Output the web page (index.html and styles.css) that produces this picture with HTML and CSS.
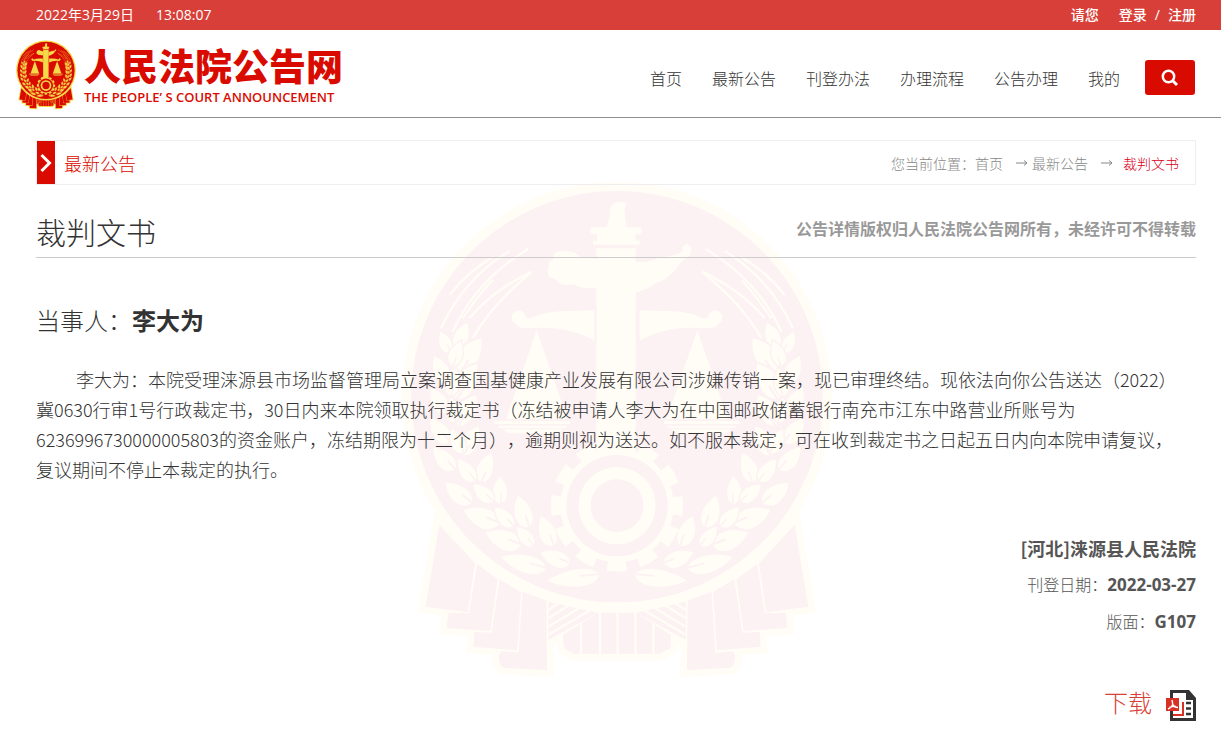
FILE: index.html
```html
<!DOCTYPE html>
<html lang="zh-CN">
<head>
    <meta charset="UTF-8">
    <meta name="viewport" content="width=device-width, initial-scale=1.0">
    <title>人民法院公告网</title>
    <link rel="stylesheet" href="styles.css">
</head>
<body>
    <!-- court emblem, shared by the logo and the watermark -->
    <svg class="defs" aria-hidden="true">
        <defs>
            <path id="leaf" d="M0 0C10-38 60-40 100 0C60 32 14 30 0 0ZM0 0L38 2"/>
            <g id="ribbon">
                <path d="M115 1035L74 1280L200 1297L222 1150Z"/>
                <path d="M228 1152L290 1198L268 1353L137 1344L142 1298L205 1300Z"/>
                <path d="M296 1198L360 1237L348 1411L217 1400L220 1356L272 1358Z"/>
                <path d="M365 1235L436 1262L438 1470L305 1463Q285 1438 300 1414L353 1418Z"/>
                <path d="M442 1265L590 1298L442 1380Z"/>
            </g>
            <g id="half">
                <g class="gold-line">
                    <path d="M120 445Q190 295 325 213M155 455Q225 300 382 207M185 415Q240 335 275 300M205 415Q270 335 392 275M215 475Q270 375 390 278M145 345Q200 275 277 230"/>
                </g>
                <g class="gold-leaf">
                    <use href="#leaf" transform="translate(170 510) rotate(289) scale(.9)"/>
                    <use href="#leaf" transform="translate(150 520) rotate(244) scale(.75)"/>
                    <use href="#leaf" transform="translate(175 580) rotate(302) scale(1.3)"/>
                    <use href="#leaf" transform="translate(155 560) rotate(288) scale(.84)"/>
                    <use href="#leaf" transform="translate(145 610) rotate(241) scale(.97)"/>
                    <use href="#leaf" transform="translate(165 660) rotate(300) scale(1.3)"/>
                    <use href="#leaf" transform="translate(150 650) rotate(280) scale(.91)"/>
                    <use href="#leaf" transform="translate(140 700) rotate(237) scale(.95)"/>
                    <use href="#leaf" transform="translate(170 740) rotate(301) scale(1.15)"/>
                    <use href="#leaf" transform="translate(165 730) rotate(259) scale(.81)"/>
                    <use href="#leaf" transform="translate(150 790) rotate(230)"/>
                    <use href="#leaf" transform="translate(185 830) rotate(298) scale(1.07)"/>
                    <use href="#leaf" transform="translate(190 820) rotate(242) scale(.85)"/>
                    <use href="#leaf" transform="translate(165 870) rotate(225)"/>
                    <use href="#leaf" transform="translate(240 910) rotate(289)"/>
                    <use href="#leaf" transform="translate(225 905) rotate(232) scale(.89)"/>
                    <use href="#leaf" transform="translate(215 970) rotate(217) scale(1.07)"/>
                    <use href="#leaf" transform="translate(300 975) rotate(269) scale(.9)"/>
                    <use href="#leaf" transform="translate(280 965) rotate(220) scale(.85)"/>
                    <use href="#leaf" transform="translate(300 1030) rotate(200) scale(1.24)"/>
                    <use href="#leaf" transform="translate(385 1045) rotate(251) scale(1.08)"/>
                    <use href="#leaf" transform="translate(340 1040) rotate(225) scale(.85)"/>
                    <use href="#leaf" transform="translate(365 1095) rotate(199) scale(1.22)"/>
                    <use href="#leaf" transform="translate(460 1100) rotate(247) scale(1.03)"/>
                    <use href="#leaf" transform="translate(400 1098) rotate(228) scale(.8)"/>
                    <use href="#leaf" transform="translate(440 1165) rotate(194) scale(1.49 1.1)"/>
                    <use href="#leaf" transform="translate(510 1150) rotate(200)"/>
                    <use href="#leaf" transform="translate(600 1182) rotate(173) scale(1.69 1.1)"/>
                </g>
                <g class="gold">
                    <path d="M580 391L500 393Q430 395 400 410Q375 424 371 402A21 21 0 1 0 345 432Q352 446 380 445Q500 436 580 482Z"/>
                    <path d="M407 450L500 718L315 718Z"/>
                    <path d="M280 723H507V732H280ZM292 737H495V744H292ZM305 748H485L470 760H320Z"/>
                </g>
            </g>
            <path id="tail" d="M485 1365L590 1298H706L810 1365L808 1405L775 1422H520L490 1405Z"/>
            <path id="stripes" d="M442 1290L475 1268M442 1315L510 1272M442 1340L545 1278M442 1364L580 1283"/>
        </defs>
        <symbol id="emblem" viewBox="0 0 1296 1500">
            <g class="ribbon-edge">
                <use href="#ribbon"/>
                <use href="#ribbon" transform="translate(1296 0) scale(-1 1)"/>
                <use href="#tail"/>
            </g>
            <g class="red">
                <use href="#ribbon"/>
                <use href="#ribbon" transform="translate(1296 0) scale(-1 1)"/>
                <use href="#tail"/>
            </g>
            <g class="gold-line">
                <use href="#stripes"/>
                <use href="#stripes" transform="translate(1296 0) scale(-1 1)"/>
                <path d="M540 1330V1422M597 1290V1422M650 1290V1422M703 1290V1422M757 1330V1422"/>
            </g>
            <circle class="gold" cx="648" cy="650" r="645"/>
            <circle class="red" cx="648" cy="650" r="617"/>
            <use href="#half"/>
            <use href="#half" transform="translate(1296 0) scale(-1 1)"/>
            <g class="gold">
                <path d="M586 850V205H704V850Z"/>
                <path d="M616 145L628 105Q622 80 645 66L678 68L670 88L676 145Z"/>
                <path d="M572 142H718Q728 152 718 163H704V182H716V194H576V182H588V163H572Q562 152 572 142Z"/>
                <path d="M590 240Q560 225 536 232Q525 210 480 213Q455 215 456 238Q438 245 444 265Q430 290 460 296Q480 322 520 313Q545 330 590 322Z"/>
                <path d="M700 245Q745 250 775 232Q810 232 845 215Q840 194 860 193Q880 205 865 227Q835 245 830 262Q800 300 765 310Q735 332 700 338Z"/>
            </g>
            <circle class="teeth" cx="648" cy="977" r="180" pathLength="120"/>
            <circle class="gold" cx="648" cy="977" r="170"/>
            <circle class="red" cx="648" cy="977" r="152"/>
            <circle class="gold" cx="648" cy="977" r="116"/>
            <circle class="red" cx="648" cy="977" r="79"/>
        </symbol>
    </svg>

    <div class="topbar">
        <div class="clock">
            <span>2022年3月29日</span>
            <span>13:08:07</span>
        </div>
        <div class="account">
            <span class="please">请您</span>
            <a href="#">登录</a>
            <span>/</span>
            <a href="#">注册</a>
        </div>
    </div>

    <header class="header">
        <a class="logo" href="#">
            <svg class="logo-emblem" aria-hidden="true"><use href="#emblem"/></svg>
            <span class="logo-text">
                <span class="logo-name">人民法院公告网</span>
                <span class="logo-sub">THE PEOPLE’ S COURT ANNOUNCEMENT</span>
            </span>
        </a>
        <nav class="nav">
            <a href="#">首页</a>
            <a href="#">最新公告</a>
            <a href="#">刊登办法</a>
            <a href="#">办理流程</a>
            <a href="#">公告办理</a>
            <a href="#">我的</a>
            <button class="btn-search" type="button" aria-label="搜索">
                <svg width="18" height="18" viewBox="0 0 18 18" fill="none" stroke="#fff">
                    <circle cx="7.5" cy="7.5" r="5.7" stroke-width="2.5"/>
                    <path d="M11.5 11.5L16 16" stroke-width="3"/>
                </svg>
            </button>
        </nav>
    </header>

    <main class="main">
        <svg class="watermark" aria-hidden="true"><use href="#emblem"/></svg>

        <div class="crumb-bar">
            <span class="crumb-arrow">
                <svg width="12" height="20" viewBox="0 0 12 20" fill="none" stroke="#fff" stroke-width="3">
                    <path d="M1.5 2L9.5 10L1.5 18"/>
                </svg>
            </span>
            <h2 class="crumb-title">最新公告</h2>
            <div class="crumbs">
                <span>您当前位置：</span>
                <a class="crumb-home" href="#">首页</a>
                <svg class="arrow" viewBox="0 0 12 8"><path d="M0 4H11M8 1.500L11 4L8 6.500"/></svg>
                <a class="crumb-list" href="#">最新公告</a>
                <svg class="arrow" viewBox="0 0 12 8"><path d="M0 4H11M8 1.500L11 4L8 6.500"/></svg>
                <a class="current" href="#">裁判文书</a>
            </div>
        </div>

        <div class="title-row">
            <h1 class="title">裁判文书</h1>
            <p class="notice">公告详情版权归人民法院公告网所有，未经许可不得转载</p>
        </div>

        <article class="article">
            <p class="party">当事人：<strong>李大为</strong></p>
            <p class="content">李大为：本院受理涞源县市场监督管理局立案调查国基健康产业发展有限公司涉嫌传销一案，现已审理终结。现依法向你公告送达（2022）冀0630行审1号行政裁定书，30日内来本院领取执行裁定书（冻结被申请人李大为在中国邮政储蓄银行南充市江东中路营业所账号为6236996730000005803的资金账户，冻结期限为十二个月），逾期则视为送达。如不服本裁定，可在收到裁定书之日起五日内向本院申请复议，复议期间不停止本裁定的执行。</p>
        </article>

        <div class="meta">
            <p class="court">[河北]涞源县人民法院</p>
            <p>刊登日期：<strong>2022-03-27</strong></p>
            <p>版面：<strong>G107</strong></p>
        </div>

        <a class="download" href="#">
            <span>下载</span>
            <svg width="30" height="31" viewBox="0 0 30 31">
                <path d="M4 0H23L30 8V31H4Z" fill="#333"/>
                <path d="M7 3H20V10H27V28H7Z" fill="#fff"/>
                <path d="M20 13H25M20 18.500H25M20 24H25" stroke="#333" stroke-width="2.500"/>
                <path d="M17 12V25H7" fill="none" stroke="#d93025" stroke-width="2"/>
                <path d="M0 8H13V21H0Z" fill="#d93025"/>
                <path d="M6 10Q7 14 6.500 15Q5 18 2 19M6.500 14.500Q8.500 17.500 12 17.500M3.500 17.500Q7 16 10 16.500" fill="none" stroke="#fff" stroke-width="1.400"/>
            </svg>
        </a>
    </main>
</body>
</html>
```
FILE: styles.css
```css
* {
    margin: 0;
    padding: 0;
    box-sizing: border-box;
}

body {
    font-family: "Noto Sans CJK SC", sans-serif;
    font-weight: 300;
    color: #333;
    background: #fff;
    text-spacing-trim: space-all;
}

a {
    color: inherit;
    text-decoration: none;
}

h1,
h2 {
    font-weight: 300;
}

.defs {
    position: absolute;
    width: 0;
    height: 0;
}

/* emblem colours */
.gold,
.gold-leaf {
    fill: var(--gold);
}

.gold-leaf {
    stroke: var(--red);
    stroke-width: 5;
}

.red {
    fill: var(--red);
}

.gold-line {
    fill: none;
    stroke: var(--gold);
    stroke-width: 7;
}

.ribbon-edge {
    fill: var(--gold);
    stroke: var(--gold);
    stroke-width: 40;
}

.teeth {
    fill: none;
    stroke: var(--gold);
    stroke-width: 36;
    stroke-dasharray: 6 4;
    stroke-dashoffset: 3;
}

/* top bar */
.topbar {
    display: flex;
    justify-content: space-between;
    height: 30px;
    padding: 0 25px 0 36px;
    font-family: "Open Sans", "Noto Sans CJK SC", sans-serif;
    font-size: 14px;
    font-weight: 400;
    line-height: 30px;
    color: #fff;
    background: #d93f39;
}

.clock {
    display: flex;
    gap: 22px;
}

.account {
    display: flex;
    gap: 8px;
    font-weight: 500;
}

.please {
    margin-right: 12px;
}

/* header */
.header {
    display: flex;
    justify-content: space-between;
    align-items: center;
    height: 88px;
    padding: 2px 26px 0 16px;
    border-bottom: 1px solid #8f8f8f;
}

.logo {
    display: flex;
    align-items: center;
    gap: 8px;
    color: #d90b00;
}

.logo-emblem {
    --red: #d90b00;
    --gold: #f5d949;
    width: 60px;
    height: 70px;
}

.logo-text {
    display: flex;
    flex-direction: column;
}

.logo-name {
    font-size: 37px;
    font-weight: 900;
    line-height: 44px;
}

.logo-sub {
    font-family: "Open Sans", sans-serif;
    font-size: 13px;
    font-weight: 600;
    line-height: 20px;
}

.nav {
    display: flex;
    align-items: center;
    gap: 30px;
    font-size: 16px;
    line-height: 24px;
    color: #333;
}

.btn-search {
    display: flex;
    align-items: center;
    justify-content: center;
    width: 50px;
    height: 35px;
    margin-left: -5px;
    border: 0;
    border-radius: 3px;
    background: #d90b00;
    cursor: pointer;
}

.nav {
    padding-top: 6px;
}

/* page content */
.main {
    position: relative;
    padding: 22px 25px 24px 36px;
}

.main > * {
    position: relative;
}

.main > .watermark {
    --red: #fcf1f3;
    --gold: #fffdf5;
    position: absolute;
    top: 62px;
    left: 50%;
    width: 432px;
    height: 500px;
    margin-left: -210px;
}

.crumb-bar {
    display: flex;
    align-items: center;
    height: 45px;
    padding-right: 16px;
    border: 1px solid #eee;
}

.crumb-arrow {
    display: flex;
    align-items: center;
    justify-content: center;
    align-self: stretch;
    width: 18px;
    background: #d90b00;
}

.crumb-title {
    margin-left: 9px;
    font-size: 18px;
    line-height: 28px;
    color: #d90b00;
}

.crumbs {
    display: flex;
    align-items: center;
    margin-left: auto;
    font-size: 14px;
    line-height: 24px;
    color: #888;
}

.arrow {
    width: 12px;
    height: 8px;
    fill: none;
    stroke: #888;
}

.crumb-home {
    margin-right: 13px;
}

.crumb-list {
    margin: 0 13px 0 4px;
}

.current {
    margin-left: 10px;
    color: #d9001b;
}

.title-row {
    display: flex;
    justify-content: space-between;
    align-items: center;
    height: 73px;
    padding-top: 20px;
    border-bottom: 1px solid #ccc;
}

.title {
    font-size: 30px;
    line-height: 40px;
}

.notice {
    padding-bottom: 6px;
    font-size: 16px;
    font-weight: 700;
    line-height: 24px;
    color: #999;
}

.party {
    margin-top: 42px;
    font-size: 24px;
    line-height: 40px;
}

.party strong {
    font-weight: 700;
}

.content {
    margin-top: 24px;
    padding-right: 16px;
    font-size: 18px;
    line-height: 30px;
    text-indent: 40px;
}

.meta {
    margin-top: 46px;
    font-size: 16px;
    line-height: 36px;
    text-align: right;
    color: #555;
}

.meta strong {
    font-family: "Open Sans", sans-serif;
    font-size: 17px;
    font-weight: 700;
}

.court {
    font-size: 18px;
    font-weight: 700;
}

.download {
    display: flex;
    justify-content: flex-end;
    align-items: center;
    gap: 14px;
    margin-top: 44px;
    font-size: 24px;
    line-height: 36px;
    color: #d93f39;
}

.download span {
    padding-bottom: 6px;
}
```
